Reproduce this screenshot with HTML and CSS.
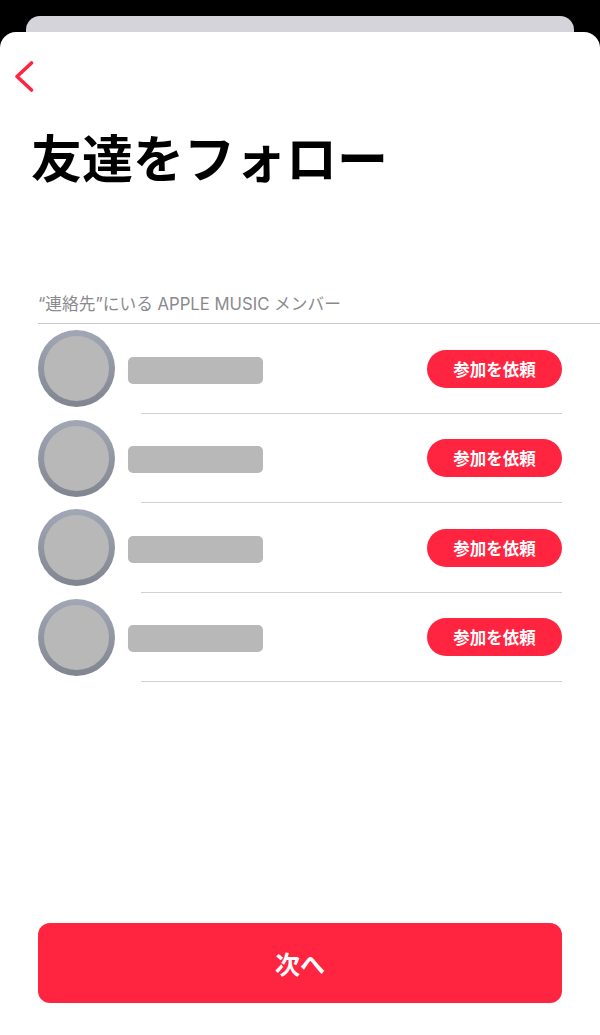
FILE: index.html
```html
<!DOCTYPE html>
<html lang="ja">
  <head>
    <meta charset="UTF-8" />
    <meta name="viewport" content="width=device-width, initial-scale=1.0" />
    <title>友達をフォロー</title>
    <link rel="stylesheet" href="styles.css">
  </head>
  <body>
    <div class="back-sheet"></div>
    <div class="sheet">
      <a class="back" href="#" aria-label="戻る">
        <svg width="20" height="31" viewBox="0 0 20 31">
          <path d="M17.5 2 L3 15.5 L17.5 29" fill="none" stroke="#ff2440" stroke-width="3.6" stroke-linecap="round" stroke-linejoin="round" />
        </svg>
      </a>
      <h1 class="title">友達をフォロー</h1>
      <div class="section-label">“連絡先”にいる APPLE MUSIC メンバー</div>
      <ul class="members">
        <li class="member">
          <div class="avatar"><div class="avatar-inner"></div></div>
          <div class="name"></div>
          <button class="invite">参加を依頼</button>
        </li>
        <li class="member">
          <div class="avatar"><div class="avatar-inner"></div></div>
          <div class="name"></div>
          <button class="invite">参加を依頼</button>
        </li>
        <li class="member">
          <div class="avatar"><div class="avatar-inner"></div></div>
          <div class="name"></div>
          <button class="invite">参加を依頼</button>
        </li>
        <li class="member">
          <div class="avatar"><div class="avatar-inner"></div></div>
          <div class="name"></div>
          <button class="invite">参加を依頼</button>
        </li>
      </ul>
      <button class="next">次へ</button>
    </div>
  </body>
</html>
```

FILE: styles.css
```css
html,
body {
  height: 100%;
}

body {
  font-family: "Noto Sans CJK JP", "Noto Sans", sans-serif;
  background-color: #000;
  margin: 0;
  padding: 16px 0 0;
  box-sizing: border-box;
  overflow: hidden;
}

.back-sheet {
  height: 16px;
  margin: 0 26px;
  background-color: #d6d4db;
  border-radius: 14px 14px 0 0;
}

.sheet {
  height: 1003px;
  display: flex;
  flex-direction: column;
  background-color: #fff;
  border-radius: 16px 16px 0 0;
}

.back {
  display: block;
  width: 20px;
  height: 31px;
  margin: 29px 0 0 14px;
}

.back svg {
  display: block;
}

.title {
  margin: 28px 0 0 31px;
  font-size: 51px;
  line-height: 72px;
  font-weight: 700;
  color: #000;
}

.section-label {
  margin: 98px 0 0 38px;
  padding-bottom: 4px;
  height: 29px;
  line-height: 29px;
  font-family: Inter, "Noto Sans CJK JP", sans-serif;
  font-size: 16.7px;
  color: #8a8a8e;
  border-bottom: 1px solid #c8c8ca;
}

.members {
  list-style: none;
  margin: 0;
  padding: 0 38px;
}

.member {
  position: relative;
  height: 89.5px;
  display: flex;
  align-items: center;
  box-sizing: border-box;
}

/* separator starts a bit after the name */
.member::after {
  content: "";
  position: absolute;
  left: 103px;
  right: 0;
  bottom: 0;
  height: 1px;
  background-color: #d0d0d2;
}

.avatar {
  width: 77px;
  height: 77px;
  flex: none;
  display: flex;
  align-items: center;
  justify-content: center;
  border-radius: 50%;
  background: linear-gradient(#a2a7b6, #80858f);
}

.avatar-inner {
  width: 65px;
  height: 65px;
  border-radius: 50%;
  background-color: #b8b8b8;
}

.name {
  width: 135px;
  height: 27px;
  margin: 3px 0 0 13px;
  background-color: #b8b8b8;
  border-radius: 5px;
}

.invite {
  width: 135px;
  height: 38px;
  margin-left: auto;
  padding: 0;
  border: none;
  border-radius: 19px;
  background-color: #ff2440;
  color: #fff;
  font-family: inherit;
  font-size: 16.5px;
  font-weight: 700;
}

.next {
  height: 80px;
  margin: auto 38px 32px;
  padding: 0;
  border: none;
  border-radius: 12px;
  background-color: #ff2440;
  color: #fff;
  font-family: inherit;
  font-size: 25px;
  font-weight: 700;
}
```
